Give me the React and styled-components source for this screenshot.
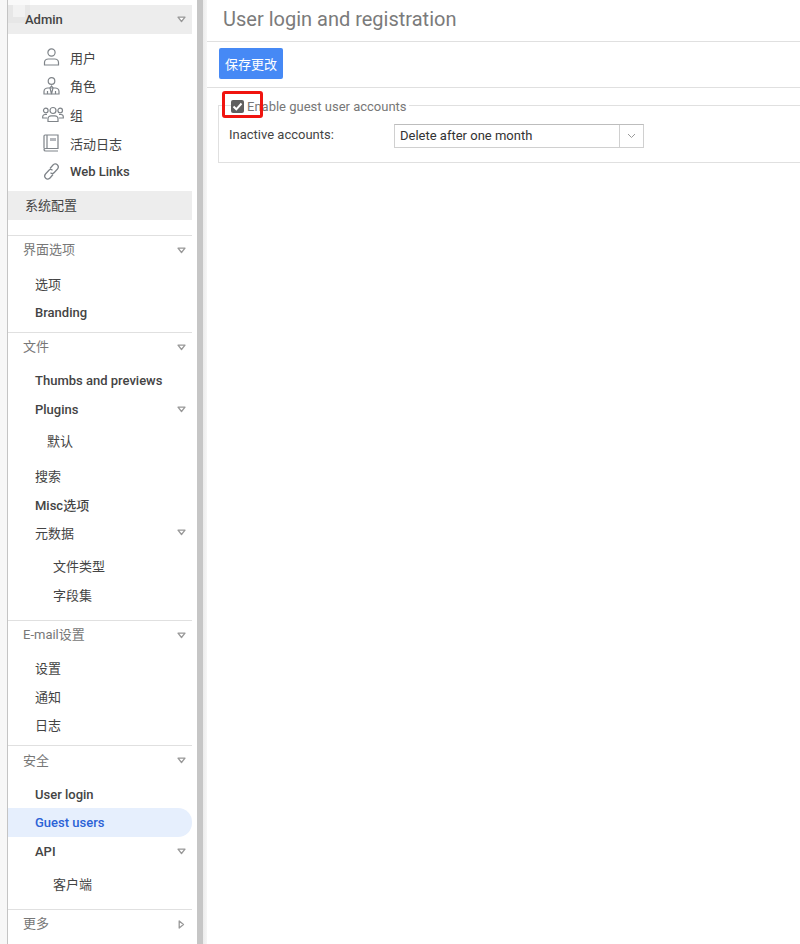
import React from "react";
import styled, { createGlobalStyle } from "styled-components";

const FONT = `Roboto, "Noto Sans CJK SC", sans-serif`;

const Global = createGlobalStyle`
  html, body { margin: 0; padding: 0; background: #fff; }
  body { font-family: ${FONT}; font-size: 14px; color: #333; }
  * { box-sizing: border-box; }
`;

const Page = styled.div`
  display: flex;
  width: 800px;
  height: 944px;
  overflow: hidden;
`;

const Rail = styled.div`
  position: relative;
  flex: 0 0 8px;
  background: #f7f7f7;
  border-right: 1px solid #c4c4c4;
`;

const Sidebar = styled.nav`
  position: relative;
  flex: 0 0 184px;
  padding-top: 5px;
  background: #fff;
`;

// faint drag ghost sitting over the top corner of the menu
const Ghost = styled.div`
  position: absolute;
  left: 0;
  top: 0;
  width: 22px;
  height: 23px;
  padding: 5px;
  background: rgba(0, 0, 0, 0.025);
  pointer-events: none;

  &::after {
    content: "";
    display: block;
    width: 12px;
    height: 12px;
    background: rgba(255, 255, 255, 0.45);
  }
`;

const Gutter = styled.div`
  flex: 0 0 15px;
  display: flex;
  padding-left: 5px;
  background: #fff;
`;

const ScrollTrack = styled.div`
  width: 6px;
  background: #c6c6c6;
`;

const ScrollEdge = styled.div`
  width: 4px;
  background: linear-gradient(90deg, #ececec, #f6f6f6);
`;

const AdminRow = styled.div`
  display: flex;
  align-items: center;
  justify-content: space-between;
  height: 29px;
  padding: 0 6px 0 17px;
  background: #ededed;
  font-weight: 500;
  font-size: 13px;
  color: #444;
`;

const IconList = styled.div`
  padding: 9px 0 5px;
`;

const IconRow = styled.div`
  display: flex;
  align-items: center;
  height: 28.6px;
  padding-left: 34px;
  font-size: 13px;
  font-weight: ${(p) => (p.$bold ? 500 : 400)};
  color: #444;
`;

const IconBox = styled.span`
  display: flex;
  justify-content: center;
  flex: 0 0 ${(p) => p.$w || 18}px;
  min-width: 0;
  margin-right: ${(p) => 28 - (p.$w || 18)}px;
  color: #7f8489;

  svg {
    flex-shrink: 0;
  }
`;

const SystemRow = styled.div`
  display: flex;
  align-items: center;
  height: 29px;
  padding: 0 0 2px 17px;
  background: #ededed;
  font-size: 13px;
  color: #444;
`;

const Section = styled.section`
  margin-top: ${(p) => p.$mt || 0}px;
  border-top: 1px solid #e0e0e0;
`;

const SectionHead = styled.div`
  display: flex;
  align-items: center;
  justify-content: space-between;
  height: 29px;
  padding: 0 6px 0 15px;
  font-size: 13px;
  color: #777;
`;

const HeadText = styled.span`
  margin-bottom: 3px;
`;

const ItemList = styled.div`
  padding-top: ${(p) => p.$top || 4.4}px;
`;

const SubList = styled.div`
  padding: ${(p) => p.$top}px 0 ${(p) => p.$bottom || 0}px;
`;

const Item = styled.div`
  display: flex;
  align-items: center;
  justify-content: space-between;
  height: 28.6px;
  padding: 0 6px 0 ${(p) => p.$indent || 27}px;
  font-size: 13px;
  font-weight: ${(p) => (p.$plain ? 400 : 500)};
  color: ${(p) => (p.$active ? "#2b62d6" : "#444")};
  background: ${(p) => (p.$active ? "#e6effd" : "transparent")};
  border-radius: ${(p) => (p.$active ? "0 14px 14px 0" : "0")};
`;

const Caret = styled.svg`
  display: block;
  width: 9px;
  height: ${(p) => p.$h}px;
`;

const Main = styled.main`
  flex: 1;
  min-width: 0;
`;

const Title = styled.h1`
  margin: 0;
  height: 42px;
  padding: 7px 0 0 16px;
  font-size: 20px;
  line-height: 24px;
  font-weight: 400;
  color: #7b7b7b;
  border-bottom: 1px solid #e0e0e0;
`;

const Toolbar = styled.div`
  height: 46px;
  padding: 6px 0 0 12px;
  border-bottom: 1px solid #e0e0e0;
`;

const SaveButton = styled.button`
  display: block;
  width: 64px;
  height: 31px;
  padding: 0;
  border: none;
  border-radius: 2px;
  background: #4689f5;
  color: #fff;
  font-family: ${FONT};
  font-size: 13px;
`;

const Fieldset = styled.fieldset`
  position: relative;
  margin: 8px 0 0 11px;
  padding: 0 0 0 10px;
  min-width: 0;
  height: 67px;
  border: 1px solid #e0e0e0;
  border-right: none;
`;

const Legend = styled.legend`
  display: flex;
  align-items: center;
  height: 18px;
  padding: 2px 2px 0 0;
  margin-left: 2px;
  font-size: 13px;
  color: #777;
`;

const CheckBox = styled.span`
  display: flex;
  align-items: center;
  justify-content: center;
  width: 13px;
  height: 13px;
  margin-right: 3px;
  border-radius: 2px;
  background: #5f5f5f;
`;

const Highlight = styled.div`
  position: absolute;
  left: 3px;
  top: -23px;
  width: 41px;
  height: 27px;
  border: 3px solid #f0140f;
  border-radius: 3px;
`;

const FieldRow = styled.div`
  display: flex;
  align-items: flex-start;
  margin-top: 9px;
`;

const FieldLabel = styled.label`
  flex: 0 0 165px;
  margin-top: 3px;
  font-size: 13px;
  line-height: 18px;
  color: #444;
`;

const Select = styled.div`
  display: flex;
  width: 250px;
  height: 24px;
  margin-top: 1px;
  border: 1px solid #d0d0d0;
  border-top-color: #bdbdbd;
`;

const SelectValue = styled.div`
  flex: 1;
  padding-left: 5px;
  font-size: 13px;
  line-height: 22px;
  color: #333;
`;

const SelectArrow = styled.div`
  display: flex;
  align-items: center;
  justify-content: center;
  width: 24px;
  border-left: 1px solid #d0d0d0;
`;

const DownCaret = () => (
  <Caret $h={7} viewBox="0 0 9 7">
    <path d="M1 1.200h7L4.500 5.500z" fill="#fff" stroke="#999" strokeWidth="1.300" strokeLinejoin="round" />
  </Caret>
);

const RightCaret = () => (
  <Caret $h={9} viewBox="0 0 9 9">
    <path d="M2.200 1v7L6.500 4.500z" fill="#fff" stroke="#999" strokeWidth="1.300" strokeLinejoin="round" />
  </Caret>
);

const stroke = { fill: "none", stroke: "currentColor", strokeWidth: 1.2 };

const UserIcon = () => (
  <svg width="17" height="18" viewBox="0 0 17 18" {...stroke}>
    <circle cx="8.500" cy="4.500" r="3.600" />
    <path d="M1.500 17v-2.500c0-2 1.800-3.500 3.800-3.500h6.400c2 0 3.800 1.500 3.800 3.500V17z" />
  </svg>
);

const RoleIcon = () => (
  <svg width="17" height="18" viewBox="0 0 17 18" {...stroke}>
    <circle cx="8.500" cy="4" r="3.300" />
    <path d="M1 17v-2.500c0-2 1.800-3.500 3.800-3.500h7.400c2 0 3.800 1.500 3.800 3.500V17z" />
    <path d="M8.500 9l-1.500 2 1.500 6 1.500-6z" />
    <path d="M4.500 14v3M12.500 14v3" />
  </svg>
);

const GroupIcon = () => (
  <svg width="22" height="17" viewBox="0 0 22 17" {...stroke}>
    <circle cx="11" cy="4.500" r="3" />
    <circle cx="3.800" cy="4.500" r="2.300" />
    <circle cx="18.200" cy="4.500" r="2.300" />
    <path d="M6 15.500v-3c0-1.500 1.500-2.700 3-2.700h4c1.500 0 3 1.200 3 2.700v3z" />
    <path d="M5 8.500H3C1.800 8.500.7 9.500.7 10.800v1.200H5M17 8.500h2c1.200 0 2.300 1 2.300 2.300v1.200H17" />
  </svg>
);

const LogIcon = () => (
  <svg width="16" height="18" viewBox="0 0 16 18" {...stroke}>
    <path d="M1 14.500V2c0-.6.400-1 1-1h13v13.500H2.800c-.9 0-1.800.7-1.800 1.200s.9 1.300 1.800 1.300H15" />
    <path d="M4 1v13.500" />
    <rect x="7" y="4" width="6" height="3" fill="#b4b7bc" stroke="none" />
  </svg>
);

const LinkIcon = () => (
  <svg width="19" height="19" viewBox="0 0 19 19" {...stroke}>
    <path d="M8 6.500l3-3.500c1-1.200 3-1.500 4.300-.3s1.300 3 .2 4.300l-3.200 3.500c-1 1.100-2.700 1.200-3.800.3" />
    <path d="M11 12.500l-3 3.500c-1 1.200-3 1.500-4.300.3s-1.300-3-.2-4.300l3.200-3.500c1-1.100 2.700-1.200 3.800-.3" />
  </svg>
);

export default function App() {
  return (
    <Page>
      <Global />
      <Rail />
      <Sidebar>
        <Ghost />
        <AdminRow>
          Admin
          <DownCaret />
        </AdminRow>
        <IconList>
          <IconRow><IconBox><UserIcon /></IconBox>用户</IconRow>
          <IconRow><IconBox><RoleIcon /></IconBox>角色</IconRow>
          <IconRow><IconBox $w={22}><GroupIcon /></IconBox>组</IconRow>
          <IconRow><IconBox><LogIcon /></IconBox>活动日志</IconRow>
          <IconRow $bold><IconBox><LinkIcon /></IconBox>Web Links</IconRow>
        </IconList>
        <SystemRow>系统配置</SystemRow>

        <Section $mt={15}>
          <SectionHead><HeadText>界面选项</HeadText><DownCaret /></SectionHead>
          <ItemList>
            <Item $plain>选项</Item>
            <Item>Branding</Item>
          </ItemList>
        </Section>

        <Section $mt={5.400}>
          <SectionHead><HeadText>文件</HeadText><DownCaret /></SectionHead>
          <ItemList>
            <Item>Thumbs and previews</Item>
            <Item>Plugins<DownCaret /></Item>
            <SubList $top={2.700} $bottom={6.400}>
              <Item $plain $indent={39}>默认</Item>
            </SubList>
            <Item $plain>搜索</Item>
            <Item>Misc选项</Item>
            <Item $plain>元数据<DownCaret /></Item>
            <SubList $top={4.700}>
              <Item $plain $indent={45}>文件类型</Item>
              <Item $plain $indent={45}>字段集</Item>
            </SubList>
          </ItemList>
        </Section>

        <Section $mt={10.900}>
          <SectionHead><HeadText>E-mail设置</HeadText><DownCaret /></SectionHead>
          <ItemList $top={3.500}>
            <Item $plain>设置</Item>
            <Item $plain>通知</Item>
            <Item $plain>日志</Item>
          </ItemList>
        </Section>

        <Section $mt={6}>
          <SectionHead><HeadText>安全</HeadText><DownCaret /></SectionHead>
          <ItemList $top={4.800}>
            <Item>User login</Item>
            <Item $active>Guest users</Item>
            <Item>API<DownCaret /></Item>
            <SubList $top={3.300}>
              <Item $plain $indent={45}>客户端</Item>
            </SubList>
          </ItemList>
        </Section>

        <Section $mt={11.300}>
          <SectionHead><HeadText>更多</HeadText><RightCaret /></SectionHead>
        </Section>
      </Sidebar>
      <Gutter>
        <ScrollTrack />
        <ScrollEdge />
      </Gutter>
      <Main>
        <Title>User login and registration</Title>
        <Toolbar>
          <SaveButton>保存更改</SaveButton>
        </Toolbar>
        <Fieldset>
          <Legend>
            <CheckBox>
              <svg width="11" height="11" viewBox="0 0 11 11">
                <path d="M1.500 5.500l2.800 2.800 5.200-5.800" fill="none" stroke="#fff" strokeWidth="2" />
              </svg>
            </CheckBox>
            Enable guest user accounts
          </Legend>
          <Highlight />
          <FieldRow>
            <FieldLabel>Inactive accounts:</FieldLabel>
            <Select>
              <SelectValue>Delete after one month</SelectValue>
              <SelectArrow>
                <svg width="9" height="6" viewBox="0 0 9 6">
                  <path d="M1 1l3.500 3.500L8 1" fill="none" stroke="#9a9a9a" strokeWidth="1" />
                </svg>
              </SelectArrow>
            </Select>
          </FieldRow>
        </Fieldset>
      </Main>
    </Page>
  );
}
